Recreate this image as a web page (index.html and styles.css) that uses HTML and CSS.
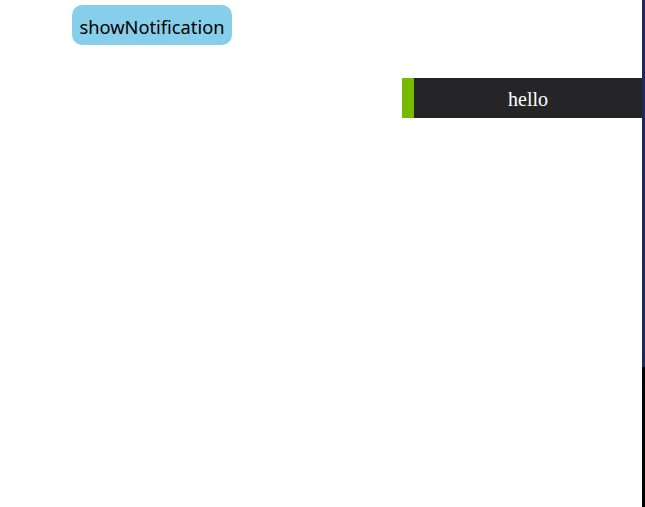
FILE: index.html
```html
<!DOCTYPE html>
<html>
<head>
<meta charset="utf-8">
<link rel="stylesheet" href="styles.css">
</head>
<body>
<div class="page">
  <main class="content">
    <button class="show-btn">showNotification</button>
    <div class="notice-row">
      <div class="notice">
        <div class="notice-accent"></div>
        <div class="notice-text">hello</div>
      </div>
    </div>
  </main>
  <div class="edge"></div>
</div>
</body>
</html>
```

FILE: styles.css
```css
html, body {
  margin: 0;
  padding: 0;
  background: #ffffff;
}
.page {
  display: flex;
  height: 507px;
  width: 645px;
}
.content {
  flex: 1;
  display: flex;
  flex-direction: column;
}
.show-btn {
  align-self: flex-start;
  margin: 5px 0 0 72px;
  width: 160px;
  height: 40px;
  padding: 3px 0 0 0;
  border: none;
  border-radius: 10px;
  background: #87ceeb;
  color: #000;
  font-family: "Noto Sans", "Open Sans", sans-serif;
  font-size: 18.3px;
}
.notice-row {
  display: flex;
  justify-content: flex-end;
  margin-top: 33px;
}
.notice {
  display: flex;
  width: 240px;
  height: 40px;
  background: #252527;
}
.notice-accent {
  width: 12px;
  background: #77b800;
}
.notice-text {
  flex: 1;
  display: flex;
  align-items: center;
  justify-content: center;
  padding-top: 2px;
  color: #ffffff;
  font-family: "Liberation Serif", serif;
  font-size: 20px;
}
.edge {
  width: 3px;
  background: linear-gradient(to bottom, #25255f 0, #1d2a56 367px, #040408 367px, #000000 100%);
}
```
